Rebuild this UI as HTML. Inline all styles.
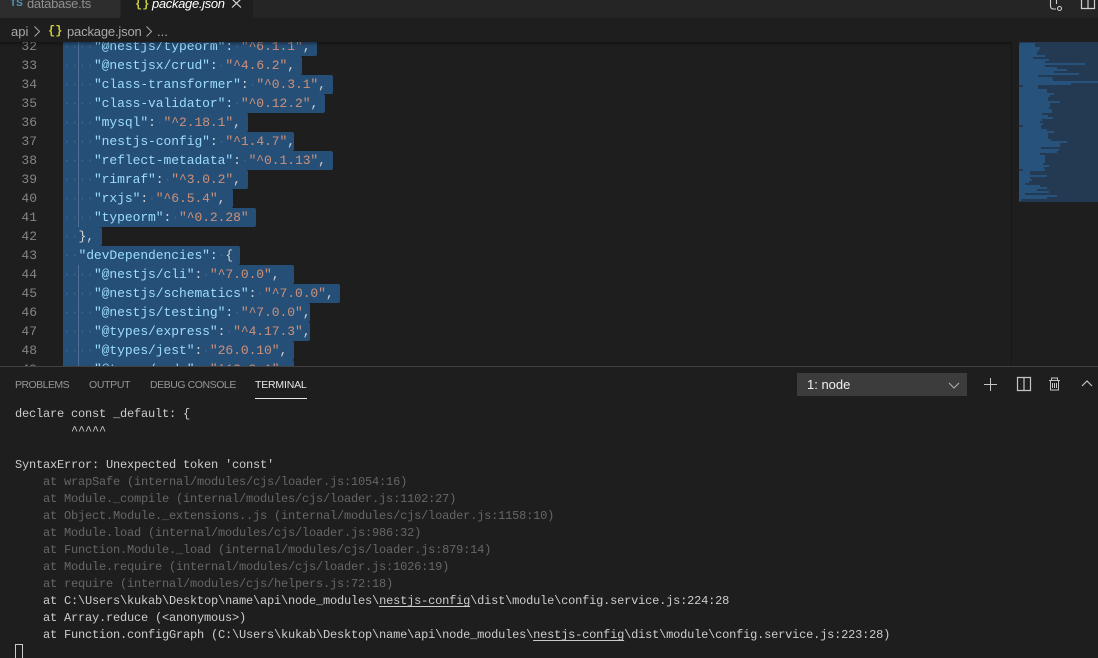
<!DOCTYPE html>
<html><head><meta charset="utf-8"><style>
html,body{margin:0;padding:0;background:#1e1e1e;width:1098px;height:658px;overflow:hidden}
*{box-sizing:border-box}
.a{position:absolute}
#ed .s{position:absolute;left:63px;height:19px;background:#264f78;border-radius:0 2px 2px 0}
#ed .l{position:absolute;left:63px;height:19px;font:13px/19px "Liberation Mono",monospace;letter-spacing:-.07px;white-space:pre;color:#9cdcfe}
#ed .n{position:absolute;left:0;width:37px;text-align:right;font:13px/19px "Liberation Mono",monospace;color:#858585}
.d{color:#3f6288}.v{color:#ce9178}.p{color:#d4d4d4}
.t{position:absolute;left:15px;font:12px/17px "Liberation Mono",monospace;letter-spacing:-.2px;white-space:pre;color:#cccccc}
.g{color:#666666}
.u{text-decoration:underline;text-underline-offset:2px}
.ui{font-family:"Liberation Sans",sans-serif}
.tab{position:absolute;top:378px;font:10.5px/14px "Liberation Sans",sans-serif;color:#969696;white-space:pre}
</style></head><body>
<div class="a" style="left:0;top:0;width:1098px;height:658px;overflow:hidden;background:#1e1e1e">

<div id="ed" class="a" style="left:0;top:36px;width:1011px;height:330px;overflow:hidden">
<div style="position:absolute;left:0;top:-36px;width:1011px;height:402px">
<div class="s" style="top:37px;width:254px"></div>
<div class="s" style="top:56px;width:239px"></div>
<div class="s" style="top:75px;width:270px"></div>
<div class="s" style="top:94px;width:262px"></div>
<div class="s" style="top:113px;width:185px"></div>
<div class="s" style="top:132px;width:231px"></div>
<div class="s" style="top:151px;width:270px"></div>
<div class="s" style="top:170px;width:185px"></div>
<div class="s" style="top:189px;width:170px"></div>
<div class="s" style="top:208px;width:193px"></div>
<div class="s" style="top:227px;width:39px"></div>
<div class="s" style="top:246px;width:177px"></div>
<div class="s" style="top:265px;width:231px"></div>
<div class="s" style="top:284px;width:277px"></div>
<div class="s" style="top:303px;width:247px"></div>
<div class="s" style="top:322px;width:247px"></div>
<div class="s" style="top:341px;width:231px"></div>
<div class="s" style="top:360px;width:231px"></div>
<div class="a" style="left:78px;top:37px;width:1px;height:190px;background:#4f7094"></div>
<div class="a" style="left:78px;top:265px;width:1px;height:110px;background:#4f7094"></div>

<div class="n" style="top:37px">32</div><div class="l" style="top:37px"><span class="d">····</span>"@nestjs/typeorm"<span class="p">:</span><span class="d">·</span><span class="v">"^6.1.1"</span><span class="p">,</span></div>
<div class="n" style="top:56px">33</div><div class="l" style="top:56px"><span class="d">····</span>"@nestjsx/crud"<span class="p">:</span><span class="d">·</span><span class="v">"^4.6.2"</span><span class="p">,</span></div>
<div class="n" style="top:75px">34</div><div class="l" style="top:75px"><span class="d">····</span>"class-transformer"<span class="p">:</span><span class="d">·</span><span class="v">"^0.3.1"</span><span class="p">,</span></div>
<div class="n" style="top:94px">35</div><div class="l" style="top:94px"><span class="d">····</span>"class-validator"<span class="p">:</span><span class="d">·</span><span class="v">"^0.12.2"</span><span class="p">,</span></div>
<div class="n" style="top:113px">36</div><div class="l" style="top:113px"><span class="d">····</span>"mysql"<span class="p">:</span><span class="d">·</span><span class="v">"^2.18.1"</span><span class="p">,</span></div>
<div class="n" style="top:132px">37</div><div class="l" style="top:132px"><span class="d">····</span>"nestjs-config"<span class="p">:</span><span class="d">·</span><span class="v">"^1.4.7"</span><span class="p">,</span></div>
<div class="n" style="top:151px">38</div><div class="l" style="top:151px"><span class="d">····</span>"reflect-metadata"<span class="p">:</span><span class="d">·</span><span class="v">"^0.1.13"</span><span class="p">,</span></div>
<div class="n" style="top:170px">39</div><div class="l" style="top:170px"><span class="d">····</span>"rimraf"<span class="p">:</span><span class="d">·</span><span class="v">"^3.0.2"</span><span class="p">,</span></div>
<div class="n" style="top:189px">40</div><div class="l" style="top:189px"><span class="d">····</span>"rxjs"<span class="p">:</span><span class="d">·</span><span class="v">"^6.5.4"</span><span class="p">,</span></div>
<div class="n" style="top:208px">41</div><div class="l" style="top:208px"><span class="d">····</span>"typeorm"<span class="p">:</span><span class="d">·</span><span class="v">"^0.2.28"</span></div>
<div class="n" style="top:227px">42</div><div class="l" style="top:227px"><span class="d">··</span><span class="p">},</span></div>
<div class="n" style="top:246px">43</div><div class="l" style="top:246px"><span class="d">··</span>"devDependencies"<span class="p">:</span><span class="d">·</span><span class="p">{</span></div>
<div class="n" style="top:265px">44</div><div class="l" style="top:265px"><span class="d">····</span>"@nestjs/cli"<span class="p">:</span><span class="d">·</span><span class="v">"^7.0.0"</span><span class="p">,</span></div>
<div class="n" style="top:284px">45</div><div class="l" style="top:284px"><span class="d">····</span>"@nestjs/schematics"<span class="p">:</span><span class="d">·</span><span class="v">"^7.0.0"</span><span class="p">,</span></div>
<div class="n" style="top:303px">46</div><div class="l" style="top:303px"><span class="d">····</span>"@nestjs/testing"<span class="p">:</span><span class="d">·</span><span class="v">"^7.0.0"</span><span class="p">,</span></div>
<div class="n" style="top:322px">47</div><div class="l" style="top:322px"><span class="d">····</span>"@types/express"<span class="p">:</span><span class="d">·</span><span class="v">"^4.17.3"</span><span class="p">,</span></div>
<div class="n" style="top:341px">48</div><div class="l" style="top:341px"><span class="d">····</span>"@types/jest"<span class="p">:</span><span class="d">·</span><span class="v">"26.0.10"</span><span class="p">,</span></div>
<div class="n" style="top:360px">49</div><div class="l" style="top:360px"><span class="d">····</span>"@types/node"<span class="p">:</span><span class="d">·</span><span class="v">"^13.9.1"</span><span class="p">,</span></div>
</div>
</div>

<div class="a" style="left:0;top:0;width:1098px;height:18px;background:#252526"></div>
<div class="a" style="left:0;top:0;width:120px;height:18px;background:#2d2d2d"></div>
<div class="a" style="left:121px;top:0;width:132px;height:18px;background:#1e1e1e"></div>
<div class="a ui" style="left:10px;top:-3px;font-size:10px;line-height:14px;font-weight:bold;color:#519aba">TS</div>
<div class="a ui" style="left:27px;top:-5px;font-size:13px;line-height:18px;letter-spacing:-.3px;color:#8f8f8f">database.ts</div>
<div class="a" style="left:135px;top:-5px;font:bold 12px/18px 'Liberation Mono',monospace;color:#cbcb41;white-space:pre">{}</div>
<div class="a ui" style="left:152px;top:-5px;font-size:13px;line-height:18px;font-style:italic;letter-spacing:-.33px;color:#ffffff">package.json</div>
<svg class="a" style="left:230px;top:0" width="14" height="10" viewBox="0 0 14 10"><path d="M2-1L11 7.5M11-1L2 7.5" stroke="#d8d8d8" stroke-width="1.2" fill="none"/></svg>

<svg class="a" style="left:1048px;top:0" width="50" height="12" viewBox="0 0 50 12" fill="none" stroke="#cfcfcf" stroke-width="1.1"><path d="M2.5-1V6Q2.5 9 5.5 9H8"/><path d="M8.5-1V4"/><circle cx="11.5" cy="8.5" r="2"/><path d="M33.5-1V8.5H46.5V-1M40-1V8.5" stroke-width="1.2"/></svg>

<div class="a" style="left:0;top:18px;width:1098px;height:24px;background:#1e1e1e;box-shadow:0 2px 3px rgba(0,0,0,.35)"></div>
<div class="a ui" style="left:11px;top:23px;font-size:13px;line-height:17px;color:#a9a9a9">api</div>
<svg class="a" style="left:33px;top:25px" width="8" height="13" viewBox="0 0 8 13"><path d="M1.5 1.5L6.5 6.5L1.5 11.5" stroke="#a9a9a9" fill="none"/></svg>
<div class="a" style="left:48px;top:23px;font:bold 12px/17px 'Liberation Mono',monospace;color:#cbcb41;white-space:pre">{}</div>
<div class="a ui" style="left:67px;top:23px;font-size:13px;line-height:17px;letter-spacing:-.17px;color:#a9a9a9">package.json</div>
<svg class="a" style="left:145px;top:25px" width="8" height="13" viewBox="0 0 8 13"><path d="M1.5 1.5L6.5 6.5L1.5 11.5" stroke="#a9a9a9" fill="none"/></svg>
<div class="a ui" style="left:157px;top:23px;font-size:13px;line-height:17px;color:#a9a9a9">...</div>

<div class="a" style="left:1011px;top:42px;width:87px;height:324px;background:#1e1e1e"></div>
<div class="a" style="left:1011px;top:42px;width:1px;height:324px;background:#171717"></div>
<div class="a" style="left:1019px;top:42px;width:79px;height:160px;background:#243a52"></div>
<svg class="a" style="left:1019px;top:42px" width="79" height="160" viewBox="0 0 79 160" shape-rendering="crispEdges" fill="#27527c">
<rect x="1" y="1" width="15" height="2"/><rect x="0" y="3" width="16" height="2"/><rect x="0" y="5" width="21" height="2"/><rect x="0" y="7" width="20" height="2"/><rect x="0" y="9" width="18" height="2"/><rect x="0" y="11" width="18" height="2"/><rect x="0" y="13" width="26" height="2"/><rect x="0" y="15" width="14" height="2"/><rect x="0" y="17" width="30" height="2"/><rect x="0" y="19" width="26" height="2"/><rect x="0" y="21" width="66" height="2"/><rect x="0" y="23" width="26" height="2"/><rect x="0" y="25" width="38" height="2"/><rect x="0" y="27" width="48" height="2"/><rect x="0" y="29" width="35" height="2"/><rect x="0" y="31" width="60" height="2"/><rect x="0" y="33" width="19" height="2"/><rect x="0" y="35" width="33" height="2"/><rect x="0" y="37" width="34" height="2"/><rect x="0" y="39" width="79" height="2"/><rect x="0" y="41" width="52" height="2"/><rect x="4" y="43" width="15" height="2"/><rect x="0" y="45" width="19" height="2"/><rect x="0" y="47" width="28" height="2"/><rect x="0" y="49" width="28" height="2"/><rect x="0" y="51" width="35" height="2"/><rect x="0" y="53" width="31" height="2"/><rect x="0" y="55" width="29" height="2"/><rect x="0" y="57" width="29" height="2"/><rect x="0" y="59" width="41" height="2"/><rect x="0" y="61" width="31" height="2"/><rect x="0" y="63" width="31" height="2"/><rect x="0" y="65" width="30" height="2"/><rect x="0" y="67" width="33" height="2"/><rect x="0" y="69" width="33" height="2"/><rect x="0" y="71" width="23" height="2"/><rect x="0" y="73" width="29" height="2"/><rect x="0" y="75" width="34" height="2"/><rect x="0" y="77" width="23" height="2"/><rect x="0" y="79" width="21" height="2"/><rect x="0" y="81" width="24" height="2"/><rect x="4" y="83" width="18" height="2"/><rect x="0" y="85" width="22" height="2"/><rect x="0" y="87" width="28" height="2"/><rect x="0" y="89" width="35" height="2"/><rect x="0" y="91" width="29" height="2"/><rect x="0" y="93" width="29" height="2"/><rect x="0" y="95" width="29" height="2"/><rect x="0" y="97" width="32" height="2"/><rect x="0" y="99" width="48" height="2"/><rect x="0" y="101" width="41" height="2"/><rect x="0" y="103" width="41" height="2"/><rect x="0" y="105" width="22" height="2"/><rect x="0" y="107" width="40" height="2"/><rect x="0" y="109" width="38" height="2"/><rect x="0" y="111" width="21" height="2"/><rect x="0" y="113" width="26" height="2"/><rect x="0" y="115" width="26" height="2"/><rect x="0" y="117" width="26" height="2"/><rect x="0" y="119" width="26" height="2"/><rect x="0" y="121" width="24" height="2"/><rect x="0" y="123" width="30" height="2"/><rect x="0" y="125" width="25" height="2"/><rect x="4" y="127" width="22" height="2"/><rect x="0" y="129" width="11" height="2"/><rect x="0" y="131" width="11" height="2"/><rect x="0" y="133" width="28" height="2"/><rect x="0" y="135" width="11" height="2"/><rect x="0" y="137" width="13" height="2"/><rect x="0" y="139" width="10" height="2"/><rect x="0" y="141" width="6" height="2"/><rect x="0" y="143" width="21" height="2"/><rect x="0" y="145" width="28" height="2"/><rect x="0" y="147" width="18" height="2"/><rect x="0" y="149" width="30" height="2"/><rect x="0" y="151" width="6" height="2"/><rect x="0" y="153" width="38" height="2"/><rect x="0" y="155" width="28" height="2"/><rect x="0" y="157" width="2" height="2"/>
</svg>

<div class="a" style="left:0;top:366px;width:1098px;height:292px;background:#1e1e1e;border-top:1px solid #414141"></div>
<div class="tab" style="left:15px;letter-spacing:-.53px">PROBLEMS</div>
<div class="tab" style="left:89px;letter-spacing:-.33px">OUTPUT</div>
<div class="tab" style="left:150px;letter-spacing:-.44px">DEBUG CONSOLE</div>
<div class="tab" style="left:255px;letter-spacing:-.19px;color:#e7e7e7">TERMINAL</div>
<div class="a" style="left:255px;top:398px;width:52px;height:1px;background:#e7e7e7"></div>

<div class="a" style="left:797px;top:373px;width:170px;height:23px;background:#3c3c3c"></div>
<div class="a ui" style="left:807px;top:377px;font-size:13px;line-height:16px;color:#f0f0f0">1: node</div>
<svg class="a" style="left:948px;top:381px" width="14" height="9" viewBox="0 0 14 9"><path d="M1 2L6 7L11 2" stroke="#b0b0b0" stroke-width="1.1" fill="none"/></svg>
<svg class="a" style="left:980px;top:374px" width="118" height="20" viewBox="0 0 118 20" fill="none" stroke="#c5c5c5" stroke-width="1">
<path d="M10.5 4V17M4 10.5H17"/>
<path d="M37.5 3.5H50.5V16.5H37.5ZM44 3.5V16.5" stroke-width="1.2"/>
<path d="M69 6.5H80M71.5 6V4H77.5V6M70.5 6.5V16H78.5V6.5M72.5 9V14M74.5 9V14M76.5 9V14"/>
<path d="M102 12L107 7L112 12" stroke-width="1.2"/>
</svg>

<div class="t" style="top:406px">declare const _default: {</div>
<div class="t" style="top:423px">        ^^^^^</div>
<div class="t" style="top:457px">SyntaxError: Unexpected token 'const'</div>
<div class="t g" style="top:474px">    at wrapSafe (internal/modules/cjs/loader.js:1054:16)</div>
<div class="t g" style="top:491px">    at Module._compile (internal/modules/cjs/loader.js:1102:27)</div>
<div class="t g" style="top:508px">    at Object.Module._extensions..js (internal/modules/cjs/loader.js:1158:10)</div>
<div class="t g" style="top:525px">    at Module.load (internal/modules/cjs/loader.js:986:32)</div>
<div class="t g" style="top:542px">    at Function.Module._load (internal/modules/cjs/loader.js:879:14)</div>
<div class="t g" style="top:559px">    at Module.require (internal/modules/cjs/loader.js:1026:19)</div>
<div class="t g" style="top:576px">    at require (internal/modules/cjs/helpers.js:72:18)</div>
<div class="t" style="top:593px">    at C:\Users\kukab\Desktop\name\api\node_modules\<span class="u">nestjs-config</span>\dist\module\config.service.js:224:28</div>
<div class="t" style="top:610px">    at Array.reduce (&lt;anonymous&gt;)</div>
<div class="t" style="top:627px">    at Function.configGraph (C:\Users\kukab\Desktop\name\api\node_modules\<span class="u">nestjs-config</span>\dist\module\config.service.js:223:28)</div>
<div class="a" style="left:15px;top:644px;width:8px;height:14px;border:1px solid #cccccc;border-bottom:none"></div>
</div>
</body></html>
